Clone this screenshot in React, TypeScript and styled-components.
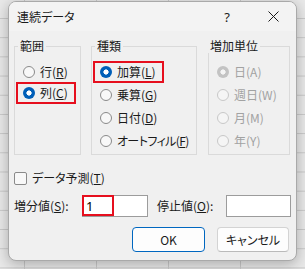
import React from 'react';
import styled, { createGlobalStyle, css } from 'styled-components';

const GlobalStyle = createGlobalStyle`
  html, body { margin: 0; padding: 0; }
  body {
    width: 305px;
    height: 269px;
    overflow: hidden;
    background-color: #e9e9e9;
    background-image:
      linear-gradient(to right, #c9c9c9 1px, transparent 1px),
      linear-gradient(to bottom, #c9c9c9 1px, transparent 1px);
    background-size: 72px 100%, 100% 19.2px;
    background-position: 24px 0, 0 18px;
    font-family: "Noto Sans CJK JP", "Noto Sans", sans-serif;
    font-feature-settings: "palt" 1;
    color: #1a1a1a;
  }
`;

const Page = styled.div`
  padding: 1px 0 0 8px;
`;

const Dialog = styled.div`
  width: 289px;
  box-sizing: border-box;
  background: #f0f0f0;
  border: 1px solid #a9a9a9;
  border-radius: 8px;
  box-shadow: 0 3px 14px rgba(0, 0, 0, 0.28);
  overflow: hidden;
  display: flex;
  flex-direction: column;
`;

const TitleBar = styled.div`
  height: 29px;
  display: flex;
  align-items: center;
  padding-left: 8px;
  background: #f3f3f3;
`;

const Title = styled.div`
  flex: 1;
  font-size: 12px;
  line-height: 14px;
  color: #1a1a1a;
`;

const CaptionButton = styled.div`
  width: 46px;
  height: 29px;
  display: flex;
  align-items: center;
  justify-content: center;
  font-family: "Noto Sans", "Liberation Sans", sans-serif;
  font-size: 13px;
  color: #1a1a1a;
`;

const Body = styled.div`
  padding: 8px 5px 8px 5px;
  display: flex;
  flex-direction: column;
`;

const Groups = styled.div`
  display: flex;
`;

const Group = styled.fieldset<{ $w: number; $gap: number }>`
  margin: 0 0 0 ${(p) => p.$gap}px;
  padding: 9px 0 0 2px;
  width: ${(p) => p.$w}px;
  height: 116px;
  box-sizing: border-box;
  min-width: 0;
  border: 1px solid #dadada;
  display: flex;
  flex-direction: column;
  gap: ${(p) => (p.$w < 70 ? 1 : 3)}px;
`;

const Legend = styled.legend<{ $inset: number }>`
  padding: 0 2px;
  margin-left: ${(p) => p.$inset}px;
  font-size: 12px;
  line-height: 14px;
  color: #1a1a1a;
`;

const Option = styled.label<{ $marked?: boolean; $disabled?: boolean }>`
  display: flex;
  align-items: center;
  gap: 5px;
  width: fit-content;
  height: 20px;
  box-sizing: border-box;
  padding: 0 7px 0 6px;
  font-size: 12px;
  line-height: 14px;
  white-space: nowrap;
  color: ${(p) => (p.$disabled ? '#a2a2a2' : '#1a1a1a')};
  ${(p) =>
    p.$marked &&
    css`
      outline: 2px solid #e60f1e;
      outline-offset: -1px;
    `}
`;

const OptionText = styled.span<{ $tight?: boolean }>`
  letter-spacing: ${(p) => (p.$tight ? '-0.6px' : '0')};
`;

const Radio = styled.span<{ $checked?: boolean; $disabled?: boolean }>`
  width: 12px;
  height: 12px;
  flex: none;
  box-sizing: border-box;
  border-radius: 50%;
  ${(p) => {
    if (p.$checked && p.$disabled)
      return css`
        background: radial-gradient(circle, #f4f4f4 0 2.3px, #c3c3c3 2.9px);
      `;
    if (p.$checked)
      return css`
        background: radial-gradient(circle, #ffffff 0 2.3px, #005fb8 2.9px);
      `;
    if (p.$disabled)
      return css`
        border: 1px solid #c8c8c8;
        background: #f5f5f5;
      `;
    return css`
      border: 1px solid #8a8a8a;
      background: #f8f8f8;
    `;
  }}
`;

const Key = styled.span`
  text-decoration: underline;
  text-underline-offset: 1px;
`;

const CheckRow = styled.label`
  margin-top: 13px;
  height: 20px;
  display: flex;
  align-items: center;
  gap: 5px;
  font-size: 12px;
  line-height: 14px;
`;

const Check = styled.span`
  width: 13px;
  height: 13px;
  box-sizing: border-box;
  border: 1px solid #8a8a8a;
  border-radius: 2px;
  background: #f8f8f8;
`;

const FieldRow = styled.div`
  margin-top: 7px;
  height: 22px;
  display: flex;
  align-items: center;
`;

const FieldLabel = styled.span<{ $w: number; $gap?: number }>`
  width: ${(p) => p.$w}px;
  margin-left: ${(p) => p.$gap ?? 0}px;
  flex: none;
  font-size: 12px;
  line-height: 14px;
`;

const InputBox = styled.div<{ $w: number }>`
  position: relative;
  width: ${(p) => p.$w}px;
  height: 22px;
  flex: none;
  box-sizing: border-box;
  border: 1px solid #9c9c9c;
  background: #ffffff;
  padding-left: 3px;
  display: flex;
  align-items: center;
  font-family: "Noto Sans", "Liberation Sans", sans-serif;
  font-size: 13px;
  color: #000;
`;

const Mark = styled.span`
  position: absolute;
  left: -1px;
  top: -1px;
  width: 32px;
  height: 21px;
  box-sizing: border-box;
  border: 2px solid #e60f1e;
`;

const Buttons = styled.div`
  margin-top: 10px;
  padding-right: 2px;
  display: flex;
  justify-content: flex-end;
  gap: 12px;
`;

const Button = styled.button<{ $primary?: boolean; $w: number }>`
  width: ${(p) => p.$w}px;
  height: 25px;
  box-sizing: border-box;
  border-radius: 4px;
  background: #fdfdfd;
  font-family: "Noto Sans CJK JP", "Noto Sans", sans-serif;
  font-feature-settings: "palt" 1;
  font-size: 12px;
  line-height: 14px;
  color: #1a1a1a;
  padding: 0;
  border: 1px solid ${(p) => (p.$primary ? '#0067c0' : '#d3d3d3')};
  ${(p) =>
    !p.$primary &&
    css`
      border-bottom-color: #bababa;
    `}
`;

type Opt = { text: string; key?: string; checked?: boolean; marked?: boolean };

function OptionItem({ o, disabled }: { o: Opt; disabled?: boolean }) {
  return (
    <Option $marked={o.marked} $disabled={disabled}>
      <Radio $checked={o.checked} $disabled={disabled} />
      <OptionText $tight={o.text.length > 4}>
        {o.text}(
        {disabled ? o.key : <Key>{o.key}</Key>})
      </OptionText>
    </Option>
  );
}

const rangeOpts: Opt[] = [
  { text: '行', key: 'R' },
  { text: '列', key: 'C', checked: true, marked: true },
];

const typeOpts: Opt[] = [
  { text: '加算', key: 'L', checked: true, marked: true },
  { text: '乗算', key: 'G' },
  { text: '日付', key: 'D' },
  { text: 'オートフィル', key: 'F' },
];

const unitOpts: Opt[] = [
  { text: '日', key: 'A', checked: true },
  { text: '週日', key: 'W' },
  { text: '月', key: 'M' },
  { text: '年', key: 'Y' },
];

export default function App() {
  return (
    <>
      <GlobalStyle />
      <Page>
        <Dialog>
          <TitleBar>
            <Title>連続データ</Title>
            <CaptionButton>?</CaptionButton>
            <CaptionButton>
              <svg width="11" height="11" viewBox="0 0 11 11">
                <path d="M0.5 0.5 L10.5 10.5 M10.5 0.5 L0.5 10.5" stroke="#1a1a1a" strokeWidth="1" />
              </svg>
            </CaptionButton>
          </TitleBar>
          <Body>
            <Groups>
              <Group $w={67} $gap={0}>
                <Legend $inset={1}>範囲</Legend>
                {rangeOpts.map((o) => (
                  <OptionItem key={o.text} o={o} />
                ))}
              </Group>
              <Group $w={106} $gap={10}>
                <Legend $inset={1}>種類</Legend>
                {typeOpts.map((o) => (
                  <OptionItem key={o.text} o={o} />
                ))}
              </Group>
              <Group $w={82} $gap={11}>
                <Legend $inset={-3}>増加単位</Legend>
                {unitOpts.map((o) => (
                  <OptionItem key={o.text} o={o} disabled />
                ))}
              </Group>
            </Groups>

            <CheckRow>
              <Check />
              <span>
                データ予測(<Key>T</Key>)
              </span>
            </CheckRow>

            <FieldRow>
              <FieldLabel $w={68}>
                増分値(<Key>S</Key>):
              </FieldLabel>
              <InputBox $w={66}>
                <Mark />1
              </InputBox>
              <FieldLabel $w={69} $gap={9}>
                停止値(<Key>O</Key>):
              </FieldLabel>
              <InputBox $w={65} />
            </FieldRow>

            <Buttons>
              <Button $primary $w={73}>OK</Button>
              <Button $w={72}>キャンセル</Button>
            </Buttons>
          </Body>
        </Dialog>
      </Page>
    </>
  );
}
